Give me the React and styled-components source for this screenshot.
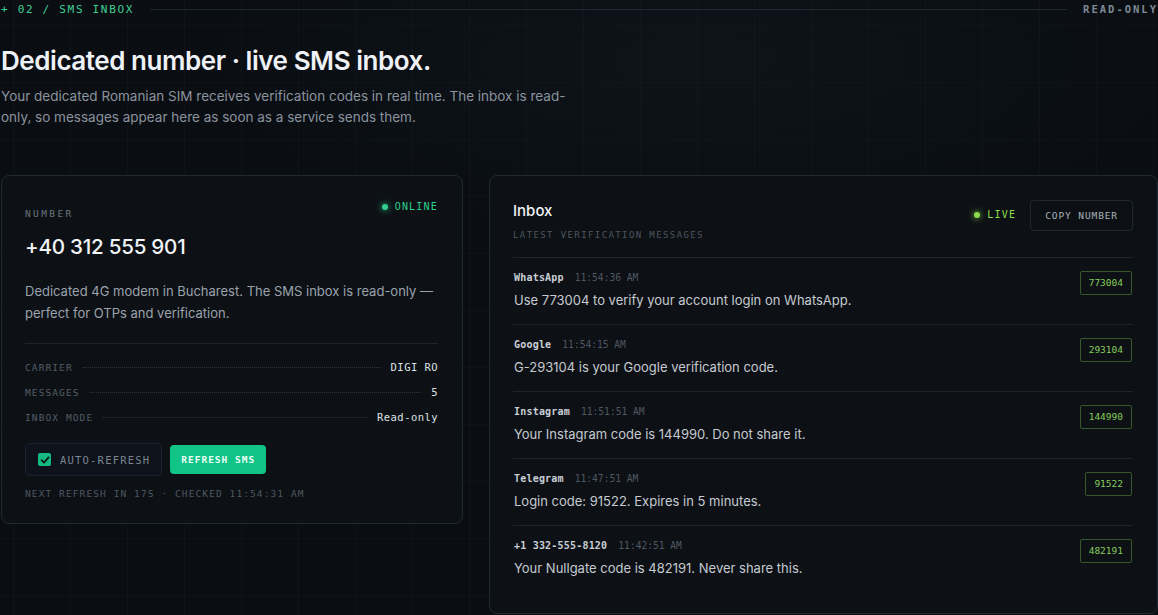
import React from 'react';
import styled, { createGlobalStyle } from 'styled-components';

const GlobalStyle = createGlobalStyle`
  html, body {
    margin: 0;
    padding: 0;
    background: #0a0e13;
  }
  body {
    font-family: Inter, "Noto Sans", sans-serif;
    color: #e6e9ee;
    -webkit-font-smoothing: antialiased;
  }
  * { box-sizing: border-box; }
`;

const mono = `"DejaVu Sans Mono", "Liberation Mono", monospace`;

const messages = [
  { from: 'WhatsApp', time: '11:54:36 AM', text: 'Use 773004 to verify your account login on WhatsApp.', code: '773004' },
  { from: 'Google', time: '11:54:15 AM', text: 'G-293104 is your Google verification code.', code: '293104' },
  { from: 'Instagram', time: '11:51:51 AM', text: 'Your Instagram code is 144990. Do not share it.', code: '144990' },
  { from: 'Telegram', time: '11:47:51 AM', text: 'Login code: 91522. Expires in 5 minutes.', code: '91522' },
  { from: '+1 332-555-8120', time: '11:42:51 AM', text: 'Your Nullgate code is 482191. Never share this.', code: '482191' },
];

const stats = [
  { label: 'CARRIER', value: 'DIGI RO' },
  { label: 'MESSAGES', value: '5' },
  { label: 'INBOX MODE', value: 'Read-only' },
];

export default function App() {
  return (
    <Page>
      <GlobalStyle />
      <SectionBar>
        <SectionTag>+ 02 / SMS INBOX</SectionTag>
        <Rule />
        <ModeTag>READ-ONLY</ModeTag>
      </SectionBar>

      <Title>Dedicated number · live SMS inbox.</Title>
      <Lead>
        Your dedicated Romanian SIM receives verification codes in real time. The inbox is read-only,
        so messages appear here as soon as a service sends them.
      </Lead>

      <Columns>
        <Card>
          <NumberHead>
            <Label>NUMBER</Label>
            <Status tone="#2fd08f">ONLINE</Status>
          </NumberHead>
          <Phone>+40 312 555 901</Phone>
          <Desc>
            Dedicated 4G modem in Bucharest. The SMS inbox is read-only — perfect for OTPs and verification.
          </Desc>
          <Divider />
          <Stats>
            {stats.map((s) => (
              <StatRow key={s.label}>
                <StatLabel>{s.label}</StatLabel>
                <Leader />
                <StatValue>{s.value}</StatValue>
              </StatRow>
            ))}
          </Stats>
          <Actions>
            <Toggle>
              <Check>
                <svg width="10" height="10" viewBox="0 0 10 10">
                  <path d="M1.6 5.2 L4 7.6 L8.6 2.4" fill="none" stroke="#0b1a14" strokeWidth="1.8" strokeLinecap="round" strokeLinejoin="round" />
                </svg>
              </Check>
              AUTO-REFRESH
            </Toggle>
            <PrimaryButton>REFRESH SMS</PrimaryButton>
          </Actions>
          <Footnote>NEXT REFRESH IN 17S · CHECKED 11:54:31 AM</Footnote>
        </Card>

        <InboxCard>
          <InboxHead>
            <div>
              <InboxTitle>Inbox</InboxTitle>
              <SubLabel>LATEST VERIFICATION MESSAGES</SubLabel>
            </div>
            <HeadRight>
              <Status tone="#8bdc4e">LIVE</Status>
              <GhostButton>COPY NUMBER</GhostButton>
            </HeadRight>
          </InboxHead>
          <MessageList>
            {messages.map((m) => (
              <Message key={m.code}>
                <MessageBody>
                  <Meta>
                    <Sender>{m.from}</Sender>
                    <Time>{m.time}</Time>
                  </Meta>
                  <Text>{m.text}</Text>
                </MessageBody>
                <Code>{m.code}</Code>
              </Message>
            ))}
          </MessageList>
        </InboxCard>
      </Columns>
    </Page>
  );
}

const Page = styled.div`
  min-height: 615px;
  padding: 0 0 2px 1px;
  background-color: #0a0e13;
  background-image:
    radial-gradient(ellipse 60% 40% at 60% 10%, rgba(30, 45, 55, 0.18), transparent 70%),
    linear-gradient(to right, rgba(255, 255, 255, 0.018) 1px, transparent 1px),
    linear-gradient(to bottom, rgba(255, 255, 255, 0.014) 1px, transparent 1px);
  background-size: 100% 100%, 57px 57px, 57px 57px;
  background-position: 0 0, 13px 0, 0 25px;
`;

const SectionBar = styled.div`
  display: flex;
  align-items: center;
  gap: 16px;
  height: 18px;
`;

const SectionTag = styled.span`
  font-family: ${mono};
  font-size: 11px;
  letter-spacing: 1.7px;
  color: #3fcf95;
  white-space: nowrap;
`;

const Rule = styled.div`
  flex: 1;
  height: 1px;
  background: #1c2830;
`;

const ModeTag = styled.span`
  font-family: ${mono};
  font-size: 10.5px;
  font-weight: 700;
  letter-spacing: 2px;
  color: #7f8995;
`;

const Title = styled.h1`
  margin: 26px 0 0;
  font-size: 26px;
  line-height: 34px;
  font-weight: 600;
  letter-spacing: -0.45px;
  color: #eef1f5;
`;

const Lead = styled.p`
  margin: 8px 0 0;
  max-width: 566px;
  font-size: 13.5px;
  line-height: 21px;
  color: #8a939e;
`;

const Columns = styled.div`
  display: grid;
  grid-template-columns: 462px 1fr;
  gap: 26px;
  align-items: start;
  margin-top: 47px;
`;

const Card = styled.section`
  background: #0d1115;
  border: 1px solid #1f2a34;
  border-radius: 8px;
  padding: 24px 24px 22px 23px;
`;

const InboxCard = styled(Card)`
  padding: 25px 24px 20px 23px;
  min-height: 439px;
`;

const NumberHead = styled.div`
  display: flex;
  justify-content: space-between;
  align-items: flex-start;
`;

const Label = styled.span`
  margin-top: 7px;
  font-family: ${mono};
  font-size: 9.5px;
  line-height: 14px;
  letter-spacing: 2.4px;
  color: #6b7480;
`;

const Status = styled.span`
  display: inline-flex;
  align-items: center;
  gap: 7px;
  font-family: ${mono};
  font-size: 10px;
  line-height: 14px;
  letter-spacing: 1.2px;
  color: ${(p) => p.tone};

  &::before {
    content: '';
    width: 6px;
    height: 6px;
    border-radius: 50%;
    background: ${(p) => p.tone};
    box-shadow: 0 0 6px ${(p) => p.tone};
  }
`;

const Phone = styled.div`
  margin-top: 12px;
  font-size: 20.6px;
  line-height: 28px;
  font-weight: 500;
  letter-spacing: -0.25px;
  color: #f2f4f7;
`;

const Desc = styled.p`
  margin: 19px 0 0;
  font-size: 13px;
  line-height: 22px;
  color: #9aa2ac;
`;

const Divider = styled.div`
  height: 1px;
  margin-top: 19px;
  background: #1d242c;
`;

const Stats = styled.div`
  display: flex;
  flex-direction: column;
  gap: 9px;
  margin-top: 15px;
`;

const StatRow = styled.div`
  display: flex;
  align-items: center;
  height: 16px;
`;

const StatLabel = styled.span`
  font-family: ${mono};
  font-size: 9.5px;
  letter-spacing: 1.1px;
  color: #545d68;
`;

const Leader = styled.span`
  flex: 1;
  margin: 0 10px;
  border-bottom: 1px dotted #2b333c;
`;

const StatValue = styled.span`
  font-family: ${mono};
  font-size: 10.5px;
  letter-spacing: 0.45px;
  color: #dde1e6;
`;

const Actions = styled.div`
  display: flex;
  align-items: center;
  gap: 8px;
  margin-top: 18px;
`;

const Toggle = styled.label`
  display: inline-flex;
  align-items: center;
  gap: 9px;
  height: 33px;
  padding: 0 11px 0 12px;
  border: 1px solid #1c2431;
  border-radius: 5px;
  background: #0e131b;
  font-family: ${mono};
  font-size: 10.5px;
  letter-spacing: 1.2px;
  color: #7c8591;
`;

const Check = styled.span`
  display: inline-flex;
  align-items: center;
  justify-content: center;
  width: 13px;
  height: 13px;
  border-radius: 2px;
  background: #16b981;
`;

const PrimaryButton = styled.button`
  height: 29px;
  padding: 0 11px;
  border: none;
  border-radius: 4px;
  background: #10c487;
  font-family: ${mono};
  font-size: 9.5px;
  font-weight: 700;
  letter-spacing: 1px;
  color: #eafff6;
`;

const Footnote = styled.div`
  margin-top: 11px;
  font-family: ${mono};
  font-size: 9.5px;
  line-height: 14px;
  letter-spacing: 1.1px;
  color: #4f5762;
`;

const InboxHead = styled.div`
  display: flex;
  justify-content: space-between;
  align-items: center;
  padding-bottom: 15px;
  border-bottom: 1px solid #1e252d;
`;

const InboxTitle = styled.div`
  font-size: 15px;
  line-height: 20px;
  font-weight: 500;
  color: #f0f2f5;
`;

const SubLabel = styled.div`
  margin-top: 8px;
  font-family: ${mono};
  font-size: 9px;
  line-height: 13px;
  letter-spacing: 1.4px;
  color: #4d5560;
`;

const HeadRight = styled.div`
  display: flex;
  align-items: center;
  gap: 14px;
  margin-top: -13px;
`;

const GhostButton = styled.button`
  height: 31px;
  padding: 0 14px;
  border: 1px solid #1f2730;
  border-radius: 4px;
  background: #0c1014;
  font-family: ${mono};
  font-size: 9.5px;
  letter-spacing: 0.9px;
  color: #aab1ba;
`;

const MessageList = styled.div`
  display: flex;
  flex-direction: column;
`;

const Message = styled.div`
  display: flex;
  justify-content: space-between;
  align-items: flex-start;
  padding: 13px 1px 14px 1px;
  border-bottom: 1px solid #1d242c;

  &:last-child {
    border-bottom: none;
  }
`;

const MessageBody = styled.div`
  display: flex;
  flex-direction: column;
  gap: 5px;
`;

const Meta = styled.div`
  display: flex;
  align-items: baseline;
  gap: 11px;
  line-height: 14px;
`;

const Sender = styled.span`
  font-family: ${mono};
  font-size: 10px;
  font-weight: 700;
  letter-spacing: 0.2px;
  color: #c9ced5;
`;

const Time = styled.span`
  font-family: ${mono};
  font-size: 9.6px;
  color: #4f5762;
`;

const Text = styled.div`
  font-size: 13px;
  line-height: 20px;
  color: #c5cad1;
`;

const Code = styled.span`
  margin-top: 0;
  padding: 5px 8px;
  border: 1px solid #35592a;
  border-radius: 2px;
  font-family: ${mono};
  font-size: 9.5px;
  line-height: 12px;
  color: #86cc5a;
`;
